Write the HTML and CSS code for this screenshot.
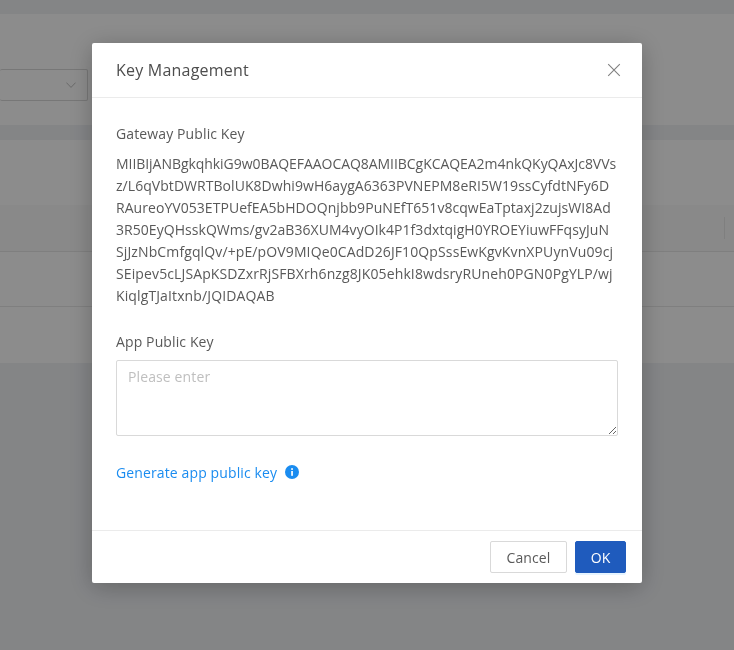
FILE: index.html
```html
<!DOCTYPE html>
<html lang="en">
<head>
<meta charset="utf-8">
<title>Key Management</title>
<link rel="stylesheet" href="styles.css">
</head>
<body>
<div class="page">
  <div class="filters">
    <div class="select"><svg class="chev" viewBox="0 0 10 6" width="10" height="6"><path d="M.4.6 5 5.4 9.6.6" fill="none" stroke="currentColor" stroke-width="1"/></svg></div>
  </div>
  <div class="table">
    <div class="thead"><span class="thead-sep"></span></div>
    <div class="trow"></div>
    <div class="trow trow-last"></div>
  </div>
</div>
<div class="overlay">
  <div class="modal">
    <header class="modal-head">
      <h1 class="modal-title">Key Management</h1>
      <svg class="close" viewBox="0 0 14 14" width="14" height="14"><path d="M1.2 1.2 12.8 12.8M12.8 1.2 1.2 12.8" fill="none" stroke="currentColor" stroke-width="1.1"/></svg>
    </header>
    <div class="modal-body">
      <div class="label">Gateway Public Key</div>
      <div class="key">
        <span class="key-line key-tight">MIIBIjANBgkqhkiG9w0BAQEFAAOCAQ8AMIIBCgKCAQEA2m4nkQKyQAxJc8VVs</span>
        <span class="key-line">z/L6qVbtDWRTBolUK8Dwhi9wH6aygA6363PVNEPM8eRI5W19ssCyfdtNFy6D</span>
        <span class="key-line">RAureoYV053ETPUefEA5bHDOQnjbb9PuNEfT651v8cqwEaTptaxj2zujsWI8Ad</span>
        <span class="key-line">3R50EyQHsskQWms/gv2aB36XUM4vyOIk4P1f3dxtqigH0YROEYiuwFFqsyJuN</span>
        <span class="key-line key-wide">SjJzNbCmfgqlQv/+pE/pOV9MIQe0CAdD26JF10QpSssEwKgvKvnXPUynVu09cj</span>
        <span class="key-line key-wide">SEipev5cLJSApKSDZxrRjSFBXrh6nzg8JK05ehkI8wdsryRUneh0PGN0PgYLP/wj</span>
        <span class="key-line key-wide">KiqlgTJaItxnb/JQIDAQAB</span>
      </div>
      <div class="label label-app">App Public Key</div>
      <textarea class="input" placeholder="Please enter"></textarea>
      <div class="gen">
        <a class="link">Generate app public key</a>
        <svg class="info" viewBox="0 0 14 14" width="14" height="14"><circle cx="7" cy="7" r="7" fill="#1a8cf0"/><rect x="6.2" y="6" width="1.7" height="4.8" fill="#fff"/><rect x="6.2" y="3.2" width="1.7" height="1.7" fill="#fff"/></svg>
      </div>
    </div>
    <footer class="modal-foot">
      <button class="btn">Cancel</button>
      <button class="btn btn-primary">OK</button>
    </footer>
  </div>
</div>
</body>
</html>
```
FILE: styles.css
```css
* { box-sizing: border-box; }
html, body { margin: 0; height: 100%; overflow: hidden; }
body { background: #f0f2f5; font-family: "Open Sans", "Noto Sans", sans-serif; font-size: 14px; letter-spacing: .12px; }

.page { padding-top: 14px; height: 650px; }
.filters { background: #fff; height: 111px; padding-top: 55px; }
.select { width: 88px; height: 32px; border: 1px solid #d9d9d9; border-radius: 2px; border-left: 0; display: flex; justify-content: flex-end; align-items: center; padding-right: 11px; color: #bfbfbf; }
.chev { display: block; }
.table { margin-top: 15px; background: #fff; height: 223px; padding-top: 65px; }
.thead { height: 47px; background: #fafafa; border-bottom: 1px solid #e8e8e8; display: flex; justify-content: flex-end; align-items: center; padding-right: 9px; }
.thead-sep { width: 1px; height: 22px; background: #e8e8e8; }
.trow { height: 55px; border-bottom: 1px solid #e8e8e8; }
.trow-last { border-bottom: 0; }

.overlay { position: fixed; inset: 0; background: rgba(0,0,0,.45); }
.modal { position: absolute; left: 92px; top: 43px; width: 550px; height: 540px; background: #fff; border-radius: 2px; box-shadow: 0 4px 24px rgba(0,0,0,.25); display: flex; flex-direction: column; color: #595959; }
.modal-head { height: 55px; flex: none; border-bottom: 1px solid #ebebeb; display: flex; align-items: center; justify-content: space-between; padding: 0 21px 0 24px; }
.modal-title { margin: 0; font-size: 16px; font-weight: 400; letter-spacing: .22px; color: #4d4d4d; }
.close { color: #808080; display: block; }
.modal-body { flex: 1; padding: 25px 24px 0; }
.label { line-height: 22px; color: #595959; }
.key { margin-top: 8px; line-height: 22px; color: #595959; }
.key-line { display: block; white-space: nowrap; letter-spacing: .05px; }
.key-tight { letter-spacing: -.05px; }
.key-wide { letter-spacing: .12px; }
.label-app { margin-top: 24px; }
.input { display: block; width: 502px; height: 76px; margin-top: 7px; padding: 5px 11px; border: 1px solid #d9d9d9; border-radius: 2px; font: inherit; letter-spacing: .12px; line-height: 22px; color: #595959; outline: 0; }
.input::placeholder { color: #bfbfbf; }
.gen { margin-top: 25px; height: 22px; display: flex; align-items: center; gap: 8px; }
.link { color: #1a8cf0; }
.info { display: block; }
.modal-foot { height: 53px; flex: none; border-top: 1px solid #ebebeb; display: flex; justify-content: flex-end; gap: 8px; padding: 10px 16px 0 0; }
.btn { width: 77px; height: 32px; background: #fff; border: 1px solid #d9d9d9; border-radius: 2px; font: inherit; letter-spacing: .12px; color: #595959; padding: 0; }
.btn-primary { width: 51px; background: #1f5bbd; border-color: #1f5bbd; color: #fff; box-shadow: 0 2px 0 rgba(5,145,255,.1); }
```
